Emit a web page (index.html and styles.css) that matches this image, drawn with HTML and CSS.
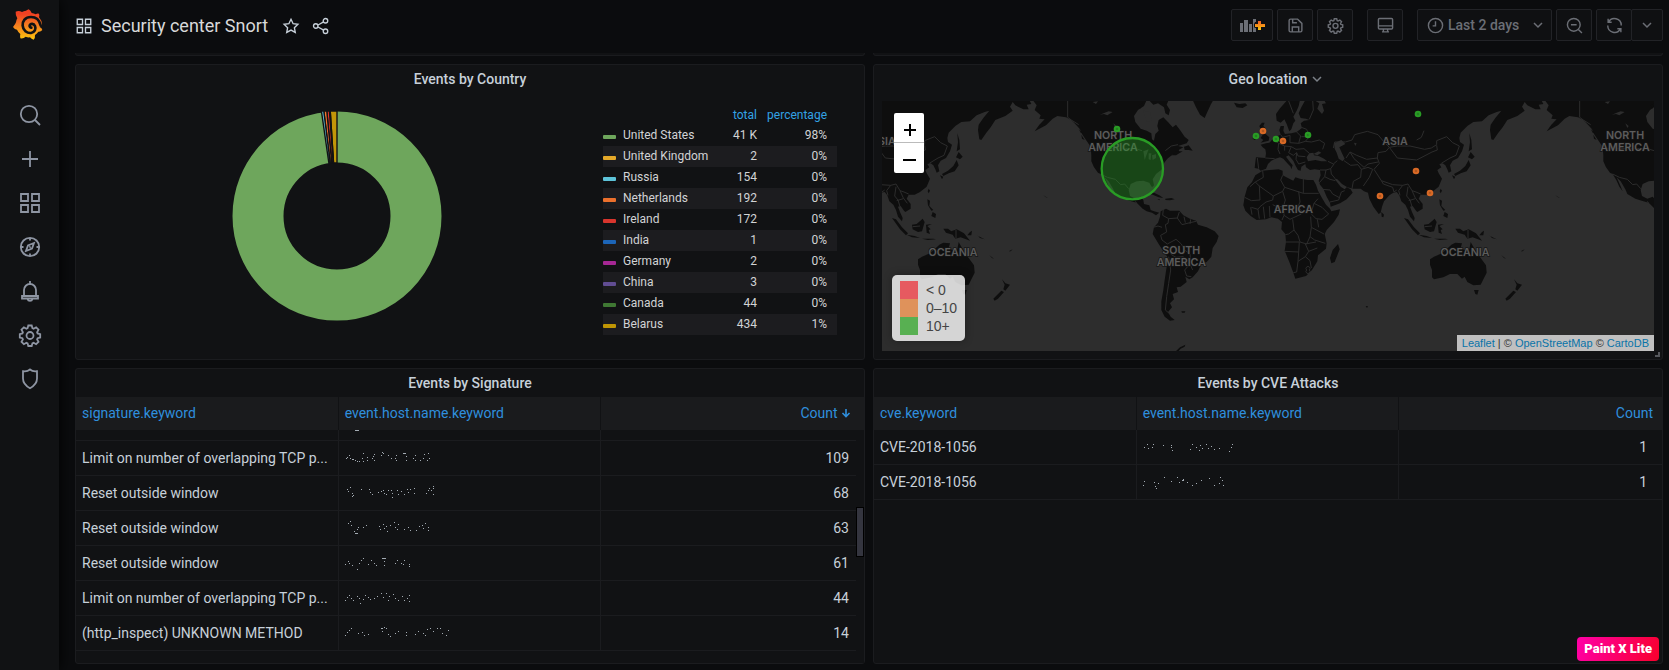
FILE: index.html
```html
<!DOCTYPE html>
<html lang="en">
<head>
<meta charset="utf-8">
<title>Security center Snort - Grafana</title>
<meta name="viewport" content="width=device-width, initial-scale=1">
<link rel="stylesheet" href="styles.css">
</head>
<body>
<nav class="sidebar" aria-label="Main menu">
  <a class="logo" href="#" aria-label="Home">
    <svg width="32" height="34" viewBox="0 0 96 102">
      <defs><linearGradient id="flame" x1="0" y1="1" x2="0" y2="0"><stop offset="0" stop-color="#fcc40c"/><stop offset=".45" stop-color="#f5821f"/><stop offset=".85" stop-color="#f04023"/></linearGradient></defs>
      <path fill="url(#flame)" d="M50 4Q56 8 59 15Q66 16 71 19Q76 15 81 17Q83 22 81 28Q90 38 90 50L83 57Q90 60 91 66Q86 72 79 71Q75 77 69 81Q70 90 65 95Q58 94 54 88Q47 89 41 86Q34 93 25 91Q23 86 25 78Q18 72 15 65Q8 65 3 57Q10 49 12 43Q13 36 16 31Q10 23 11 11Q20 7 30 12Q35 9 42 8Q45 6 50 4Z"/>
      <path fill="none" stroke="#111214" stroke-width="8" stroke-linecap="round" d="M86 52Q80 27 57 27C39 27 31 40 32 53C33 67 45 76 57 75C68 73 73 63 69 54C65 46 56 46 53 52C52 56 55 59 58 59"/>
    </svg>
  </a>
  <a class="side-link" href="#" aria-label="Search"><svg class="icon-lg" viewBox="0 0 24 24"><circle cx="11" cy="11" r="8.2"/><path d="M17 17l5 5"/></svg></a>
  <a class="side-link" href="#" aria-label="Create"><svg class="icon-lg" viewBox="0 0 24 24"><path d="M12 4v16M4 12h16"/></svg></a>
  <a class="side-link" href="#" aria-label="Dashboards"><svg class="icon-lg" viewBox="0 0 24 24"><path d="M3 3h7v7H3zM14 3h7v7h-7zM3 14h7v7H3zM14 14h7v7h-7z"/></svg></a>
  <a class="side-link" href="#" aria-label="Explore"><svg class="icon-lg" viewBox="0 0 24 24"><circle cx="12" cy="12" r="9.2"/><path d="M16 8l-2 5.500-6 2.500 2-5.500zM12 3v2.500M12 18.500V21M3 12h2.500M18.500 12H21M11.500 12.500l1-1"/></svg></a>
  <a class="side-link" href="#" aria-label="Alerting"><svg class="icon-lg" viewBox="0 0 24 24"><path d="M12 2v3M6 17v-6a6 6 0 0 1 12 0v6M4 17h16v2.500H4zM9.500 20a2.600 2.600 0 0 0 5 0"/></svg></a>
  <a class="side-link" href="#" aria-label="Configuration"><svg class="icon-lg" viewBox="0 0 24 24"><use href="#gear"/></svg></a>
  <a class="side-link" href="#" aria-label="Server admin"><svg class="icon-lg" viewBox="0 0 24 24"><path d="M12 2.500c2 1.700 4.500 2.100 7 1.700v7.300c0 4.500-3 7.500-7 9.700-4-2.200-7-5.200-7-9.700V4.200c2.500.4 5 0 7-1.700z"/></svg></a>
</nav>

<div class="main">
  <header class="topbar">
    <div class="title-area">
      <svg class="icon" viewBox="0 0 24 24"><path d="M3 3h7v7H3zM14 3h7v7h-7zM3 14h7v7H3zM14 14h7v7h-7z"/></svg>
      <h1>Security center Snort</h1>
      <button class="plain star" aria-label="Mark as favorite"><svg class="icon" viewBox="0 0 24 24"><path d="M12 3l2.800 5.900 6.400.8-4.700 4.500 1.200 6.400L12 17.500l-5.700 3.100 1.200-6.400-4.700-4.500 6.400-.8z"/></svg></button>
      <button class="plain" aria-label="Share dashboard"><svg class="icon" viewBox="0 0 24 24"><circle cx="5" cy="12" r="3"/><circle cx="18" cy="5" r="3"/><circle cx="18" cy="19" r="3"/><path d="M8 10.700l7.500-4.200M8 13.300l7.500 4.200"/></svg></button>
    </div>
    <div class="tools">
      <button class="tool wide" aria-label="Add panel">
        <svg width="26" height="16" viewBox="0 0 26 16"><defs><linearGradient id="plus" x1="0" y1="0" x2="0" y2="1"><stop offset="0" stop-color="#f05a28"/><stop offset="1" stop-color="#fbca0a"/></linearGradient></defs><path fill="#6b6e75" d="M1 6h3v9H1zM5 3h4v12H5zM10 7h3v8h-3zM14 2h3v3h-1l-1 2v3l1 1h1v4h-3z"/><path fill="url(#plus)" d="M19 4h3v3h4v3h-4v3h-3v-3h-3V7h3z"/></svg>
      </button>
      <button class="tool" aria-label="Save dashboard"><svg class="icon" viewBox="0 0 24 24"><path d="M3 5a2 2 0 0 1 2-2h10l6 6v10a2 2 0 0 1-2 2H5a2 2 0 0 1-2-2zM8 3v5h6M7.500 21v-7h9v7"/></svg></button>
      <button class="tool" aria-label="Dashboard settings"><svg class="icon" viewBox="0 0 24 24"><g id="gear"><path d="M10.300 2.500h3.400l.7 2.700 1.200.5 2.500-1.400 2.400 2.400-1.400 2.500.5 1.200 2.600.7v3.400l-2.600.7-.5 1.200 1.400 2.400-2.400 2.400-2.500-1.400-1.200.5-.7 2.700h-3.400l-.7-2.700-1.200-.5-2.500 1.400-2.400-2.400 1.400-2.400-.5-1.200-2.600-.7v-3.400l2.600-.7.5-1.200-1.400-2.500 2.400-2.400 2.500 1.400 1.200-.5z"/><circle cx="12" cy="12.500" r="3.500"/></g></svg></button>
      <button class="tool monitor" aria-label="Cycle view mode"><svg class="icon" viewBox="0 0 24 24"><path d="M3.500 2h17A1.500 1.500 0 0 1 22 3.500v12a1.500 1.500 0 0 1-1.500 1.500h-17A1.500 1.500 0 0 1 2 15.500v-12A1.500 1.500 0 0 1 3.500 2zM2 12.500h20M7 21h10M9 17v4M15 17v4"/></svg></button>
      <button class="tool range"><svg class="icon" viewBox="0 0 24 24"><circle cx="12" cy="12" r="10"/><path d="M12 6v6.500H8"/></svg><span>Last 2 days</span><svg class="chev" viewBox="0 0 12 12"><path d="M2 4l4 4 4-4"/></svg></button>
      <button class="tool" aria-label="Zoom out"><svg class="icon" viewBox="0 0 24 24"><circle cx="11" cy="11" r="9"/><path d="M17.500 17.500l5 5M7 11h8"/></svg></button>
      <div class="group">
        <button class="tool" aria-label="Refresh dashboard"><svg class="icon" viewBox="0 0 24 24"><path d="M3 2.500v5h5M3.500 7.500A9.500 9.500 0 0 1 21.500 12M21 21.500v-5h-5M20.500 16.500A9.500 9.500 0 0 1 2.500 12"/></svg></button>
        <button class="tool narrow" aria-label="Refresh interval"><svg class="chev" viewBox="0 0 12 12"><path d="M2 4l4 4 4-4"/></svg></button>
      </div>
    </div>
  </header>

  <main class="dash">
    <div class="stub"></div><div class="stub"></div>

    <section class="panel">
      <h2>Events by Country</h2>
      <div class="pie-body">
        <div class="pie">
          <svg width="210" height="210" viewBox="-105 -105 210 210" role="img" aria-label="Events by country donut chart">
            <circle r="79" fill="none" stroke="#6ea65c" stroke-width="51"/>
            <g stroke="#111214" stroke-width="1.400">
              <path fill="#c29608" d="M0-105L-6.780-105L-3.470-53L0-53Z"/>
              <path fill="#37702e" d="M-6.780-105L-7.560-105L-3.870-53L-3.470-53Z"/>
              <path fill="#e0342d" d="M-7.560-105L-10.230-105L-5.240-53L-3.870-53Z"/>
              <path fill="#f0742f" d="M-10.230-105L-13.220-105L-6.770-53L-5.240-53Z"/>
              <path fill="#64c6dc" d="M-13.220-105L-15.600-105L-7.990-52L-6.770-53Z"/>
            </g>
          </svg>
        </div>
        <table class="legend">
          <thead><tr><th></th><th class="num">total</th><th class="pct">percentage</th></tr></thead>
          <tbody>
            <tr><td><i class="sw c1"></i>United States</td><td>41 K</td><td>98%</td></tr>
            <tr><td><i class="sw c2"></i>United Kingdom</td><td>2</td><td>0%</td></tr>
            <tr><td><i class="sw c3"></i>Russia</td><td>154</td><td>0%</td></tr>
            <tr><td><i class="sw c4"></i>Netherlands</td><td>192</td><td>0%</td></tr>
            <tr><td><i class="sw c5"></i>Ireland</td><td>172</td><td>0%</td></tr>
            <tr><td><i class="sw c6"></i>India</td><td>1</td><td>0%</td></tr>
            <tr><td><i class="sw c7"></i>Germany</td><td>2</td><td>0%</td></tr>
            <tr><td><i class="sw c8"></i>China</td><td>3</td><td>0%</td></tr>
            <tr><td><i class="sw c9"></i>Canada</td><td>44</td><td>0%</td></tr>
            <tr><td><i class="sw c10"></i>Belarus</td><td>434</td><td>1%</td></tr>
          </tbody>
        </table>
      </div>
    </section>

    <section class="panel">
      <h2>Geo location <svg class="chev" viewBox="0 0 12 12"><path d="M2 4l4 4 4-4"/></svg></h2>
      <div class="map">
        <svg class="world" viewBox="36 33 2316 750" preserveAspectRatio="xMidYMid slice" role="img" aria-label="World map of events">
          <defs>
            <g id="world">
              <g class="land">
                <path d="M488 30L500 46L494 60L512 76L508 86L524 88L508 104L494 124L528 106L548 86L562 78L588 82L604 90L618 104L630 118L636 132L648 150L662 170L664 196L664 214L672 232L684 248L692 252L704 272L712 290L722 304L714 284L704 262L716 274L730 298L736 312L760 326L784 334L800 338L818 356L830 364L846 368L858 376L868 368L852 364L842 360L838 346L822 342L820 330L812 320L796 326L780 318L776 300L782 282L800 274L820 272L838 278L846 292L852 286L848 268L858 252L876 238L880 222L892 206L910 192L930 188L926 180L940 172L924 168L950 160L956 150L944 140L930 120L918 104L908 112L896 98L880 82L866 90L862 108L866 122L856 132L852 152L846 148L844 130L830 122L812 116L796 96L792 78L804 60L822 48L830 30Z"/>
                <path d="M836 30L850 44L864 40L882 52L886 70L896 76L900 60L890 44L896 30ZM806 46L818 38L812 56ZM942 170L956 166L968 182L956 180L944 180ZM904 196L920 184L938 184L918 196Z"/>
                <path d="M968 30L978 52L990 74L1004 84L1012 66L1022 44L1030 30ZM1092 38L1108 42L1126 40L1132 46L1118 54L1100 52Z"/>
                <path d="M836 312L852 308L868 316L880 324L866 322L848 314ZM886 326L904 324L914 328L900 331L886 330ZM862 328L870 328L868 331ZM626 116L638 130L632 128ZM634 134L644 150L636 146ZM520 316L534 324L528 322Z"/>
                <path d="M872 364L888 356L900 362L928 362L940 376L960 386L978 392L984 404L1010 412L1034 424L1046 438L1040 456L1028 474L1024 500L1010 516L994 522L984 544L968 562L958 568L946 560L950 576L932 590L920 592L924 606L908 612L912 628L900 640L906 652L894 666L902 680L914 690L900 692L884 680L874 660L874 634L880 600L884 570L890 530L892 500L880 484L866 462L848 432L852 412L864 398L870 380ZM934 664L946 664L944 668L936 668ZM918 783L930 772L946 764L944 770L932 776L926 783Z"/>
              </g>
              <g class="land" transform="translate(1080 0)">
                <path d="M172 30L150 55L138 72L140 92L152 98L163 88L170 102L178 124L184 118L190 100L196 92L190 80L200 62L206 48L210 30Z"/>
                <path d="M226 30L214 52L206 70L212 84L228 86L238 90L222 92L212 100L216 114L200 126L184 130L165 132L160 122L162 108L152 108L148 120L152 134L138 140L128 148L118 158L108 160L92 164L98 172L106 178L108 190L106 204L78 202L76 216L74 234L86 236L92 242L108 236L114 222L124 212L136 206L150 202L160 206L172 220L182 230L184 238L188 226L178 214L168 200L176 196L190 212L196 226L204 240L212 242L214 230L226 222L228 232L240 240L254 238L270 240L272 256L266 272L270 284L280 296L290 320L300 338L302 350L330 340L350 328L368 308L362 298L350 292L344 298L332 290L318 272L312 264L322 268L336 282L352 292L370 296L392 296L402 304L414 308L418 326L430 350L446 372L452 368L456 350L462 334L478 316L490 308L500 306L508 316L514 334L526 344L534 360L540 380L552 394L554 384L546 366L540 350L548 348L558 362L562 366L578 356L578 342L566 326L572 314L590 314L606 306L626 290L636 266L626 250L622 240L634 232L628 222L638 220L646 226L652 238L656 248L664 244L660 226L668 212L684 204L696 184L702 164L690 156L688 144L692 128L712 108L730 96L756 94L776 76L800 66L814 62L796 84L782 104L780 120L784 148L790 150L804 130L818 112L832 90L862 78L884 62L876 50L884 36L892 46L916 58L932 58L926 44L940 42L934 30Z"/>
                <path d="M96 98L104 98L100 108L108 116L104 130L118 142L116 152L92 158L100 150L92 144L98 134L92 118L88 108ZM72 132L84 130L86 144L74 150L68 146Z"/>
                <path d="M98 242L120 240L146 238L158 242L158 256L178 266L190 272L196 262L210 266L232 270L250 270L258 284L264 302L276 324L288 344L300 356L304 364L330 358L326 374L312 396L290 420L284 432L290 460L288 476L264 496L262 514L246 540L228 558L196 566L190 548L178 516L164 482L168 456L166 432L154 418L156 396L144 386L124 382L108 388L80 390L62 378L46 362L40 346L44 320L52 292L66 276L76 256ZM324 462L329 478L314 516L304 520L300 504L308 480ZM454 366L462 374L460 382L455 380Z"/>
                <path d="M722 186L734 200L726 208L714 202ZM716 210L722 226L710 244L692 250L676 258L672 252L690 242L706 228ZM666 256L676 260L672 268ZM718 130L724 150L726 178L716 184L720 156ZM632 296L636 302L632 310L629 304ZM628 328L636 332L634 348L646 360L640 362L630 346ZM644 366L654 372L652 384L640 378Z"/>
                <path d="M522 384L534 388L552 412L570 430L564 436L546 418ZM566 434L590 438L606 444L582 442ZM582 404L596 402L614 386L620 396L612 424L600 426L584 418ZM624 404L642 402L628 408L638 418L632 420L636 432L626 428ZM612 446L626 446L646 446L654 448L630 450ZM676 416L690 416L700 424L716 418L738 430L756 452L744 448L728 442L712 446L704 434L684 428ZM756 426L762 422L760 436L748 436ZM772 430L780 438L800 448L786 444ZM814 496L828 506L822 504ZM872 484L884 478L878 484Z"/>
                <path d="M600 508L612 500L636 490L650 478L664 464L676 458L696 460L692 474L710 484L718 478L722 456L730 470L738 484L752 504L768 526L770 548L758 572L752 584L730 586L712 576L704 560L696 566L682 552L660 552L640 562L612 568L606 562L606 540L600 524ZM732 600L746 600L742 614L736 612ZM852 568L862 580L876 584L862 602L856 598L860 584ZM850 602L858 606L840 626L830 632L826 626ZM407 648L414 649L411 654Z"/>
              </g>
              <g class="sea">
                <path d="M690 74L704 68L716 64L728 66L712 76L702 72ZM668 36L684 34L678 42ZM820 184L836 178L832 188L824 210ZM836 190L844 190L842 210L836 208ZM846 196L858 192L858 204L848 210ZM730 100L740 108L736 114ZM820 62L840 66L846 92L830 96Z"/>
                <g transform="translate(1080 0)">
                  <path d="M312 160L334 150L346 162L328 172L336 190L344 206L338 214L326 206L320 188L314 176ZM230 202L238 190L250 188L252 196L266 198L282 206L292 214L274 214L256 210L234 214ZM250 192L266 184L274 188L262 196ZM372 158L380 160L376 168ZM252 30L268 40L262 56L276 72L282 62L276 42L288 40L282 30Z"/>
                  <path class="lake" d="M560 150L574 142L582 122"/>
                </g>
              </g>
              <g class="border">
                <path d="M593 33V82L604 90L626 104M692 252L712 262L736 268L752 284L764 282L776 296M796 334L800 340M660 176H796L816 182M886 182L904 168L924 164M880 358L878 376L896 386L894 400L886 404L890 426M896 386L922 384L928 366M922 384L936 404L960 398L978 394M942 380L946 398M962 388L960 402M850 412L864 408L876 412M890 426L872 436L876 450L892 462L918 448L934 462L944 480L960 492L962 516L950 520L940 500L918 502L904 494L896 470M896 500L902 540L896 580L890 620L886 660L902 674M944 540L960 522L968 540M944 540L950 558L964 560"/>
                <g transform="translate(1080 0)">
                  <path d="M98 242L100 262L76 276L60 290M76 276L88 288L130 318L158 304L164 292L152 270L158 256M88 288L90 330L64 332L44 322M164 292L220 310V266M220 310H266M130 318L128 330L108 336L90 350L84 358L64 352M158 304L166 330L160 350L140 350L128 344M206 304L210 336L204 350L218 368M218 368L246 360L252 340L264 326M252 340L276 352L296 372L276 388L258 386L244 372M160 350L162 376L156 390M162 376L180 388L214 372M62 352L66 374M84 358L88 386M100 350L104 386M118 348L120 382M188 388L192 420L176 432L166 434M242 380L244 412L240 440L254 450L286 460M244 412L282 432M262 388L266 412M192 420L204 436L210 456L230 462L240 440M164 484L206 486L208 456M206 486L204 514L200 546L190 548M204 514L226 500L236 484L262 474M226 500L240 512L244 534M236 484L226 462L258 456M168 456L208 456M230 540A6 6 0 1 0 238 540A6 6 0 1 0 230 540"/>
                  <path d="M106 204L134 206M82 204L86 236M128 148L146 160L144 178L150 192M146 160L164 168L184 170L198 178M152 134L158 142L180 136V158L206 160L212 138L200 126M158 142L152 158M164 168L164 182M184 170L176 188L190 196L200 188L204 198L226 200M206 160L226 154L244 156L268 150L284 160L278 178M226 154L238 140L230 118L214 112M238 140L214 140M198 178L222 176L238 190M200 188L198 208L206 222L226 216M248 30L250 60L238 88M176 33L190 70"/>
                  <path d="M294 214L310 222L322 212M288 240L302 236L312 222M270 240L288 240L284 260L268 278M284 260L300 268L316 272M302 236L304 252L314 264M276 298L300 300L308 312L330 324M300 336L326 330L334 306L344 302M342 212L362 226L384 224L394 238L392 262L370 274L366 296M310 174L314 156L346 156L366 150L374 134L412 124L444 134L462 156L478 172L468 184L444 188L442 204L410 208L380 196L360 186L348 204M360 186L372 206L402 232L414 222L444 216M394 238L414 232L428 238L418 262L400 288M442 204L448 220L432 238L454 272L488 284L518 286L534 282L546 302L558 306L572 312M454 272L460 282L488 292M518 286L506 302L510 316M488 292L492 306L500 300M534 290L530 318L540 330L546 350M546 302L556 324L568 340M536 332L556 326M478 172L502 168L540 168L584 178L604 174L620 164L620 152L650 140L668 158L688 168L678 196L660 204L634 220M478 172L502 204L560 210L606 186L622 180L620 166M584 410L606 408M714 420V446"/>
                </g>
              </g>
              <g class="names">
                <text x="729" y="147">NORTH</text><text x="729" y="183">AMERICA</text>
                <text x="934" y="492">SOUTH</text><text x="934" y="528">AMERICA</text>
                <text x="1270" y="369">AFRICA</text><text x="1575" y="165">ASIA</text><text x="1785" y="498">OCEANIA</text>
              </g>
            </g>
          </defs>
          <rect class="ocean" x="-2000" y="0" width="6000" height="1000"/>
          <use href="#world" x="-1536"/><use href="#world"/><use href="#world" x="1536"/>
          <g class="hits high">
            <circle class="big" cx="787" cy="236" r="92"/>
            <circle cx="741" cy="117" r="7"/><circle cx="1158" cy="138" r="7"/><circle cx="1218" cy="147" r="7"/><circle cx="1314" cy="135" r="7"/><circle cx="1644" cy="72" r="7"/>
          </g>
          <g class="hits mid">
            <circle cx="1179" cy="123" r="7"/><circle cx="1239" cy="153" r="7"/><circle cx="1638" cy="243" r="7"/><circle cx="1530" cy="318" r="7"/><circle cx="1680" cy="309" r="7"/>
          </g>
        </svg>
        <div class="zoomer"><button aria-label="Zoom in"><svg viewBox="0 0 30 30"><path d="M16 11v12M10 17h12"/></svg></button><button aria-label="Zoom out map"><svg viewBox="0 0 30 30"><path d="M9 17h13"/></svg></button></div>
        <ul class="scale"><li class="low">&lt; 0</li><li class="mid">0–10</li><li class="high">10+</li></ul>
        <div class="credit"><a href="#">Leaflet</a> | © <a href="#">OpenStreetMap</a> © <a href="#">CartoDB</a></div>
      </div>
      <svg class="grip" width="5" height="5" viewBox="0 0 5 5"><path d="M4 0v4H0"/></svg>
    </section>

    <section class="panel">
      <h2>Events by Signature</h2>
      <div class="scroll">
        <table class="grid">
          <thead><tr><th>signature.keyword</th><th>event.host.name.keyword</th><th>Count <svg class="sort" viewBox="0 0 10 10"><path d="M5 1v7.500M1.500 5L5 8.500 8.500 5"/></svg></th></tr></thead>
          <tbody>
            <tr class="cut"><td></td><td><svg class="noise" viewBox="0 0 110 10"><path d="M10 0h4"/></svg></td><td></td></tr>
            <tr><td>Limit on number of overlapping TCP p...</td><td><svg class="noise" viewBox="0 0 110 16"><path d="M1 8h1M2 7h1M4 5h1M5 8h1M7 9h1M8 9h1M10 10h1M12 11h1M14 11h1M17 8h1M18 3h1M18 11h1M22 7h1M22 10h1M28 6h1M27 8h1M29 4h1M29 10h1M37 2h1M38 3h1M36 5h1M43 5h1M46 8h1M50 8h1M51 10h1M51 5h1M58 3h3M61 6h1M61 10h1M68 8h1M70 5h1M70 10h1M75 10h1M78 8h1M79 4h1M83 3h1M84 8h1M82 10h1"/></svg></td><td>109</td></tr>
            <tr><td>Reset outside window</td><td><svg class="noise" viewBox="0 0 110 16"><path d="M2 4h1M3 6h1M5 2h1M7 8h1M8 10h1M7 11h1M16 4h1M24 4h1M25 7h1M27 9h1M33 7h1M36 6h1M38 5h1M39 8h1M41 9h1M43 5h1M46 5h1M47 8h1M47 12h1M52 5h1M53 9h1M56 6h1M59 9h1M62 4h1M63 7h1M65 4h1M69 3h1M69 8h1M81 8h1M83 5h1M84 3h1M86 5h1M88 3h1M88 9h1M88 1h1"/></svg></td><td>68</td></tr>
            <tr><td>Reset outside window</td><td><svg class="noise" viewBox="0 0 110 16"><path d="M3 3h1M5 1h1M6 5h1M10 13h3M9 11h1M12 9h1M13 7h1M18 7h1M21 5h1M34 6h1M35 9h1M38 4h1M39 8h1M41 6h1M42 11h1M45 5h1M49 2h1M50 7h1M52 9h1M53 4h1M59 9h1M63 7h1M65 10h1M71 10h1M74 6h1M77 5h1M78 8h1M80 3h1M83 7h1M83 10h1"/></svg></td><td>63</td></tr>
            <tr><td>Reset outside window</td><td><svg class="noise" viewBox="0 0 110 16"><path d="M0 9h1M3 6h1M4 8h1M7 10h1M12 14h1M14 8h1M16 5h1M18 3h1M23 9h1M26 5h1M29 8h1M31 10h1M37 3h4M39 6h1M39 10h1M50 8h1M52 5h1M56 8h1M58 9h1M59 5h1M64 9h1M64 11h1"/></svg></td><td>61</td></tr>
            <tr><td>Limit on number of overlapping TCP p...</td><td><svg class="noise" viewBox="0 0 110 16"><path d="M0 10h1M2 7h1M4 5h1M6 8h1M8 10h1M12 6h1M14 8h1M15 13h1M18 9h1M20 5h1M23 7h1M25 9h1M29 8h1M32 6h1M36 3h1M38 7h1M41 3h1M43 10h1M44 6h1M48 4h1M50 8h1M53 10h1M57 6h1M59 10h1M62 8h1M64 5h1M64 11h1"/></svg></td><td>44</td></tr>
            <tr><td>(http_inspect) UNKNOWN METHOD</td><td><svg class="noise" viewBox="0 0 110 16"><path d="M0 10h1M2 7h1M4 5h1M6 3h1M13 8h1M17 7h1M19 10h1M23 9h1M36 3h2M39 2h1M41 3h1M37 6h1M43 9h1M45 11h1M50 8h1M53 6h1M61 7h1M61 10h1M70 9h1M73 6h1M78 8h1M82 4h1M85 3h1M80 10h1M88 6h1M92 3h1M95 3h1M97 8h1M101 10h1M103 5h1"/></svg></td><td>14</td></tr>
          </tbody>
        </table>
        <div class="track"><div class="thumb"></div></div>
      </div>
    </section>

    <section class="panel">
      <h2>Events by CVE Attacks</h2>
      <div class="scroll">
        <table class="grid">
          <thead><tr><th>cve.keyword</th><th>event.host.name.keyword</th><th class="flush">Count</th></tr></thead>
          <tbody>
            <tr><td>CVE-2018-1056</td><td><svg class="noise" viewBox="0 0 110 16"><path d="M1 8h1M4 5h1M5 9h1M10 5h1M9 8h1M20 6h1M28 8h1M29 11h1M28 6h1M47 10h1M49 5h1M53 8h1M56 11h1M57 6h1M59 9h1M63 5h1M65 9h1M68 7h1M71 10h1M76 9h1M86 12h1M88 8h1M89 5h1"/></svg></td><td>1</td></tr>
            <tr><td>CVE-2018-1056</td><td><svg class="noise" viewBox="0 0 110 16"><path d="M1 7h1M0 11h1M11 8h1M12 12h1M13 14h1M15 9h1M21 3h1M28 7h1M34 3h1M36 8h1M39 6h2M40 5h1M44 8h1M49 11h1M53 9h1M58 6h1M66 4h1M71 11h1M76 9h1M77 3h1M79 6h1M80 11h1"/></svg></td><td>1</td></tr>
          </tbody>
        </table>
      </div>
    </section>
  </main>
</div>
<div class="badge">Paint X Lite</div>
</body>
</html>
```

FILE: styles.css
```css
* { box-sizing: border-box; }

body {
  margin: 0;
  min-height: 100vh;
  display: flex;
  background: #0b0c0e;
  color: #c7d0d9;
  font: 14px/20px Roboto, "Liberation Sans", sans-serif;
  overflow: hidden;
}

button { font: inherit; color: inherit; cursor: pointer; }

.sidebar {
  flex: 0 0 59px;
  display: flex;
  flex-direction: column;
  align-items: center;
  background: #111214;
  box-shadow: 0 0 14px #000;
  color: #8e95a3;
}
.logo { height: 93px; padding: 8px 0 0; margin-right: 3px; }
.side-link { display: flex; height: 44px; padding-left: 1px; align-items: center; color: inherit; }

.icon, .icon-lg, .chev, .sort { fill: none; stroke: currentColor; stroke-width: 2; display: block; }
.icon { width: 18px; height: 18px; }
.icon-lg { width: 24px; height: 24px; stroke-width: 1.8; }
.chev { width: 12px; height: 12px; stroke-width: 1.5; }

.main { flex: 1; min-width: 0; padding: 0 6px 6px 16px; }

.topbar {
  height: 53px;
  display: flex;
  justify-content: space-between;
  padding-top: 9px;
}
.title-area { display: flex; align-items: center; height: 34px; color: #c7d0d9; }
.title-area h1 { margin: 0 14px 0 8px; font-size: 18px; font-weight: 400; line-height: 24px; color: #d8d9da; }
.title-area .icon { stroke-width: 1.8; }
.plain { background: none; border: 0; padding: 0; margin-right: 12px; }

.tools { display: flex; gap: 4px; color: #6b6e75; }
.tool {
  width: 36px;
  height: 32px;
  padding: 0;
  display: flex;
  align-items: center;
  justify-content: center;
  background: #0f1012;
  border: 1px solid #222327;
  border-radius: 2px;
}
.tool.wide { width: 42px; }
.tool .icon { width: 17px; height: 17px; }
.tool.monitor { margin: 0 10px; }
.tool.range { width: 135px; padding: 0 7px 0 9px; font-weight: 500; }
.tool.range span { flex: 1; text-align: left; padding-left: 4px; }
.group { display: flex; }
.group .tool + .tool { margin-left: -1px; }
.tool.narrow { width: 32px; }

.dash { display: grid; grid-template-columns: 1fr 1fr; column-gap: 8px; row-gap: 8px; }
.stub { height: 3px; background: #111214; border: 1px solid #1a1b1e; border-top: 0; border-radius: 0 0 3px 3px; }
.panel {
  position: relative;
  min-width: 0;
  min-height: 296px;
  background: #111214;
  border: 1px solid #1b1c1f;
  border-radius: 3px;
}
.panel h2 {
  margin: 0;
  height: 28px;
  line-height: 28px;
  font-size: 14px;
  font-weight: 500;
  display: flex;
  align-items: center;
  justify-content: center;
  gap: 4px;
}
.panel h2 .chev { color: #7b8087; margin-right: -16px; }

.pie-body { display: flex; gap: 14px; padding: 8px 27px 8px 8px; }
.pie { flex: 1; display: flex; justify-content: center; padding-top: 10px; }
.legend { width: 234px; border-collapse: collapse; table-layout: fixed; font-size: 12px; line-height: 21px; align-self: flex-start; color: #d2d3d5; }
.legend th { height: 24px; padding: 4px 10px 0 0; line-height: 20px; font-weight: 400; color: #33a2e5; text-align: right; }
.legend .num { width: 54px; }
.legend .pct { width: 70px; }
.legend td { height: 21px; padding: 0 10px 0 0; text-align: right; white-space: nowrap; }
.legend td:first-child { text-align: left; padding-right: 0; }
.legend tbody tr:nth-child(even) { background: #1c1c1f; }
.sw { display: inline-block; width: 13px; height: 4px; margin-right: 7px; border-radius: 1px; }
.c1 { background: #6ea65c; }
.c2 { background: #e5a929; }
.c3 { background: #5dc3d9; }
.c4 { background: #ec702c; }
.c5 { background: #d8352d; }
.c6 { background: #1c65b8; }
.c7 { background: #a62794; }
.c8 { background: #614d93; }
.c9 { background: #3f7833; }
.c10 { background: #bf9504; }

.map { position: relative; margin: 8px; height: 250px; overflow: hidden; }
.world { display: block; width: 100%; height: 100%; }
.ocean, .sea { fill: #2d2d2d; }
.land { fill: #0e0e0e; }
.lake { fill: none; stroke: #2d2d2d; stroke-width: 3; }
.border { fill: none; stroke: #2c2c2c; stroke-width: 3; stroke-linejoin: round; }
.names { font: 600 32px Inter, sans-serif; text-anchor: middle; fill: #5c5c5c; stroke: #151515; stroke-width: 4; paint-order: stroke; }
.hits circle { stroke-width: 6; fill-opacity: .8; }
.hits .big { stroke-width: 7; fill-opacity: .4; }
.hits.high circle { fill: #299c25; stroke: #299c25; }
.hits.mid circle { fill: #d96a26; stroke: #d96a26; }

.zoomer { position: absolute; top: 12px; left: 12px; border-radius: 2px; overflow: hidden; }
.zoomer button { display: block; width: 30px; height: 30px; padding: 0; border: 0; background: #fff; }
.zoomer button:first-child { border-bottom: 1px solid #bbb; }
.zoomer svg { display: block; width: 30px; height: 30px; fill: none; stroke: #000; stroke-width: 2; }

.scale {
  position: absolute;
  left: 10px;
  bottom: 10px;
  margin: 0;
  padding: 6px 8px;
  list-style: none;
  font: 14px/18px "Liberation Sans", sans-serif;
  color: #444;
  white-space: nowrap;
  background: rgba(255, 255, 255, .8);
  border-radius: 5px;
  box-shadow: 0 0 8px rgba(0, 0, 0, .3);
}
.scale li { border-left: 18px solid; padding-left: 8px; }
.scale .low { border-color: #e65a60; }
.scale .mid { border-color: #df925b; }
.scale .high { border-color: #58b052; }

.credit {
  position: absolute;
  right: 0;
  bottom: 0;
  padding: 0 5px;
  font: 11px/16px "Liberation Sans", sans-serif;
  color: #333;
  background: rgba(255, 255, 255, .7);
}
.credit a { color: #0873a8; text-decoration: none; }
.grip { position: absolute; right: 2px; bottom: 2px; fill: none; stroke: #55575c; stroke-width: 2; }

.scroll { position: relative; height: 266px; overflow: hidden; }
.grid { width: 100%; border-collapse: separate; border-spacing: 0; table-layout: fixed; }
.grid th, .grid td { padding: 0 6px; text-align: left; white-space: nowrap; overflow: hidden; text-overflow: ellipsis; border-right: 1px solid #1b1c1f; }
.grid th { height: 33px; padding-bottom: 2px; font-weight: 400; color: #2f8fdd; background: #1a1b1d; border-color: #111214; }
.grid td { height: 35px; line-height: 34px; border-bottom: 1px solid #1b1c1f; }
.grid th:last-child, .grid td:last-child { text-align: right; padding-right: 15px; border-right: 0; }
.grid th:last-child { padding-right: 13px; }
.grid th.flush { padding-right: 9px; }
.grid .cut td { height: 11px; line-height: 10px; vertical-align: top; }
.sort { display: inline-block; width: 10px; height: 10px; stroke-width: 1.6; }
.noise { display: block; width: 110px; fill: none; stroke: #a3abb3; stroke-width: 1; shape-rendering: crispEdges; }
.track { position: absolute; top: 33px; right: 0; bottom: 0; width: 8px; padding-top: 77px; background: #111214; }
.thumb { height: 50px; background: #34353f; border: 1px solid #000; }

.badge {
  position: fixed;
  right: 10px;
  bottom: 9px;
  padding: 0 7px;
  line-height: 24px;
  border-radius: 4px;
  font-size: 13px;
  font-weight: 900;
  color: #fff;
  background: linear-gradient(110deg, #ff00a8, #f8002c);
}
```
